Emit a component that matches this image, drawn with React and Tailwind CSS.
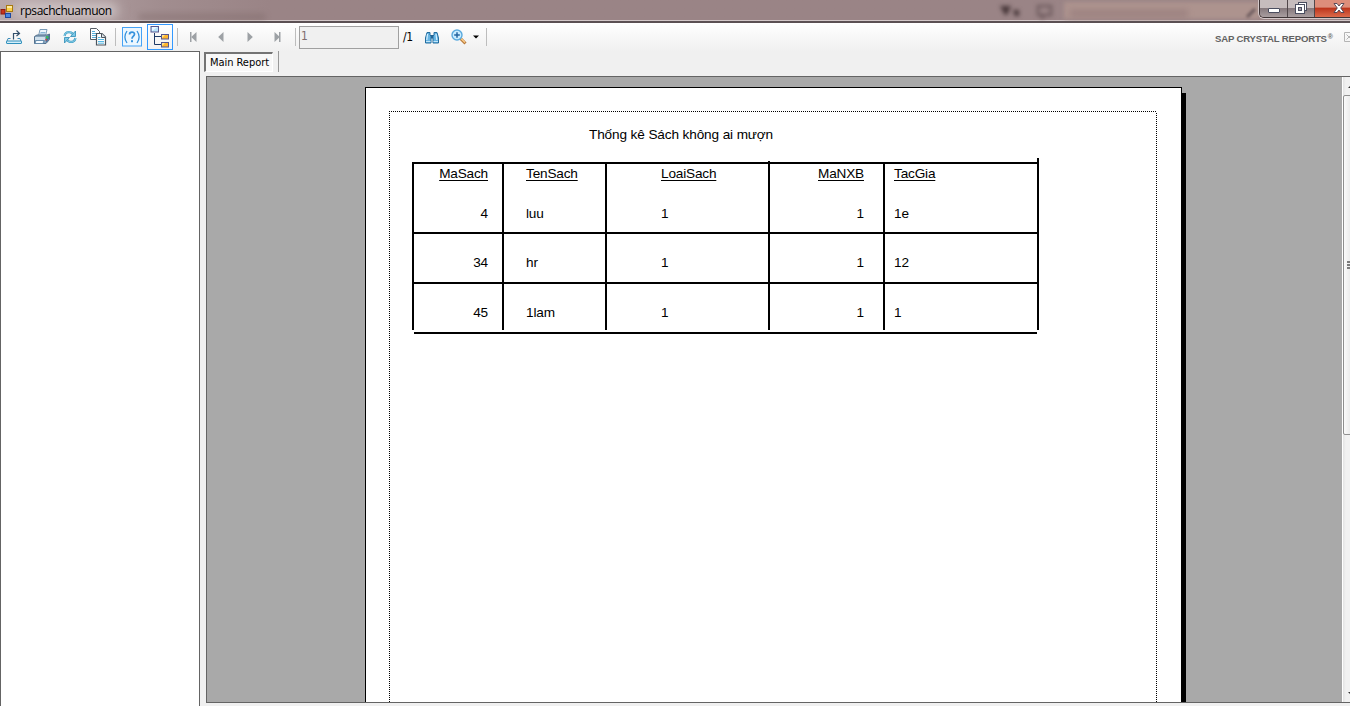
const columns = [
  { name: "MaSach", cell: "w-[90px] text-right pr-[14px]" },
  { name: "TenSach", cell: "w-[103px] pl-[22px]" },
  { name: "LoaiSach", cell: "w-[163px] pl-[54px]" },
  { name: "MaNXB", cell: "w-[115px] text-right pr-[19px]" },
  { name: "TacGia", cell: "w-[156px] pl-[9px] border-r-2" },
];

const rows = [
  ["4", "luu", "1", "1", "1e"],
  ["34", "hr", "1", "1", "12"],
  ["45", "1lam", "1", "1", "1"],
];

function AppIcon() {
  return (
    <svg width="14" height="14" viewBox="0 0 14 14">
      <rect x="6.5" y="1.5" width="6" height="6" fill="#fbd04a" stroke="#a87a10" />
      <rect x="7" y="2" width="5" height="2" fill="#fdeaa0" />
      <rect x="1" y="5.5" width="4" height="4.5" fill="#c8341c" stroke="#8c1c10" />
      <rect x="5.5" y="9.5" width="5" height="4" fill="#4a86e0" stroke="#1c48a0" />
    </svg>
  );
}

function ExportIcon() {
  return (
    <svg width="18" height="18" viewBox="0 0 18 18" fill="none">
      <path d="M5.5 10.5H3L1.5 14.5M12.5 10.5H15L16.5 14.5" stroke="#3d8cb8" />
      <rect x="1.5" y="13" width="15" height="2.5" rx="0.5" fill="#d4effa" stroke="#3090bc" />
      <path d="M8.5 11.5V5.5H14M11.5 2.5L14.5 5.5L11.5 8" stroke="#33506c" strokeWidth="1.2" />
    </svg>
  );
}

function PrinterIcon() {
  return (
    <svg width="18" height="18" viewBox="0 0 18 18">
      <path d="M5.5 8L7 1.5H14L12.5 8Z" fill="#eef6fc" stroke="#7a9cb8" />
      <path d="M7.5 4.5H12.5M7 6H12" stroke="#88b4d4" />
      <path d="M1.5 8.5L4 7H14L16.5 6V11.5L13 15.5H1.5Z" fill="#87a3bb" stroke="#54708c" />
      <path d="M2 9H12V12H2Z" fill="#cfdfeb" />
      <path d="M3 12.5H11L10 15.5H2Z" fill="#f6fbff" stroke="#5580a4" strokeWidth="0.8" />
      <path d="M13 8.5L16 7V11L13 14.5Z" fill="#416ea0" />
      <rect x="13" y="8" width="2.5" height="2.5" fill="#3cb85c" />
      <rect x="12.5" y="11" width="1.5" height="1.5" fill="#d84030" />
    </svg>
  );
}

function RefreshIcon() {
  return (
    <svg width="16" height="16" viewBox="0 0 16 16" fill="none">
      <path d="M2.5 7C3 3.7 6 2.3 9 3.5L11 5" stroke="#3b9cc4" strokeWidth="2.2" />
      <path d="M2.5 7C3 3.7 6 2.3 9 3.5L11 5" stroke="#a4def2" strokeWidth="0.8" />
      <path d="M13.5 2V7.5H8.5Z" fill="#7ccae8" stroke="#2f8ab4" strokeWidth="0.8" />
      <path d="M13.5 9C13 12.3 10 13.7 7 12.5L5 11" stroke="#3b9cc4" strokeWidth="2.2" />
      <path d="M13.5 9C13 12.3 10 13.7 7 12.5L5 11" stroke="#a4def2" strokeWidth="0.8" />
      <path d="M2.5 14V8.5H7.5Z" fill="#7ccae8" stroke="#2f8ab4" strokeWidth="0.8" />
    </svg>
  );
}

function CopyIcon() {
  return (
    <svg width="18" height="18" viewBox="0 0 18 18">
      <path d="M1.5 0.5H7.5L10.5 3.5V11.5H1.5Z" fill="#fff" stroke="#555c64" />
      <path d="M3 3.5H6M3 5.5H8M3 7.5H8M3 9.5H8" stroke="#58b0dc" />
      <path d="M7.5 5.5H13L16.5 9V17H7.5Z" fill="#fff" stroke="#4c545c" strokeWidth="1.2" />
      <path d="M12.5 5.5V9.5H16.5" fill="#dce4ea" stroke="#4c545c" />
      <path d="M9 9.5H11.5M9 11.5H15M9 13.5H15M9 15.2H15" stroke="#58b8e4" />
    </svg>
  );
}

function HelpIcon() {
  return (
    <svg width="20" height="20" viewBox="0 0 20 20" fill="none">
      <rect x="0.5" y="0.5" width="19" height="18.5" fill="#ecf7ff" stroke="#45a2f5" />
      <path d="M5 4Q0.8 10 5 16M15 4Q19.2 10 15 16" stroke="#3592dd" strokeWidth="1.3" />
      <path d="M7.5 7.5C7.5 4.3 12.6 4.4 12.5 7.3C12.4 9 10 9.3 10 11.7" stroke="#3592dd" strokeWidth="1.7" />
      <rect x="9" y="13.2" width="2" height="2" fill="#3592dd" />
    </svg>
  );
}

function TreeIcon() {
  return (
    <svg width="20" height="22" viewBox="0 0 20 22">
      <path d="M4.5 7V18.5H11M4.5 10.5H11" fill="none" stroke="#1c3866" />
      <rect x="1" y="0.5" width="7.5" height="5.5" fill="#b8e2fa" stroke="#57568e" />
      <path d="M2 5L7.5 1H2Z" fill="#ecf8ff" />
      <rect x="11.5" y="8.5" width="7" height="4.5" fill="#ffb52c" stroke="#57568e" />
      <rect x="11.5" y="16.5" width="7" height="4.5" fill="#ffb52c" stroke="#57568e" />
      <path d="M12 9H15L12 12ZM12 17H15L12 20Z" fill="#ffe48c" />
    </svg>
  );
}

function NavIcon({ kind }) {
  const left = kind === "first" || kind === "prev";
  const bar = kind === "first" || kind === "last";
  return (
    <svg width="8" height="10" viewBox="0 0 8 10" fill="#9da1a5" className="shrink-0">
      <path d={left ? "M6.5 0V10L1.2 5Z" : "M0.5 0V10L5.8 5Z"} />
      {bar && <rect x={left ? 0 : 5} y="0" width="1.5" height="10" />}
    </svg>
  );
}

function FindIcon() {
  return (
    <svg width="16" height="16" viewBox="0 0 16 16">
      <path d="M3 3.5H6V6L7 7V14H1.5V9Z" fill="#67b5e4" stroke="#246c9e" />
      <path d="M13 3.5H10V6L9 7V14H14.5V9Z" fill="#67b5e4" stroke="#246c9e" />
      <path d="M7 6H9V9.5H7Z" fill="#226496" />
      <path d="M3.5 5L2.8 11M12 5L12.8 11" stroke="#d5f0ff" strokeWidth="1.2" />
      <path d="M2 12.5H6.5M9.5 12.5H14" stroke="#c2e6fa" />
    </svg>
  );
}

function ZoomIcon() {
  return (
    <svg width="16" height="16" viewBox="0 0 16 16">
      <path d="M9.5 9.5L14.5 14.5" stroke="#b77a3c" strokeWidth="3" />
      <path d="M10 9.5L14 13.5" stroke="#ffd08c" strokeWidth="1.2" />
      <circle cx="6" cy="6" r="5" fill="#c8ecff" stroke="#5aaade" strokeWidth="1.4" />
      <path d="M6 3.2V8.8M3.2 6H8.8" stroke="#2464a0" strokeWidth="1.5" />
    </svg>
  );
}

function Separator({ className }) {
  return <div className={`h-[18px] w-px shrink-0 bg-[#bdbdbd] ${className}`} />;
}

function TitleBar() {
  return (
    <header className="relative flex h-[23px] shrink-0 items-start overflow-hidden border-b-2 border-[#5b5053] bg-[#9a8486] shadow-[inset_0_-1px_0_#d2c7c8]">
      <div className="absolute inset-0 h-5 bg-linear-to-r from-[#b9a9ab] from-0% via-[#a18d8f] via-[12%] to-[#9a8486] to-[20%]" />
      <div className="absolute left-[14px] top-[3px] h-[15px] w-[104px] rounded-full bg-[#cfc5c6] blur-[6px]" />
      <div className="absolute left-[138px] top-[14px] h-[6px] w-[128px] rounded-full bg-[#75605f] opacity-40 blur-[3px]" />
      <div className="absolute left-[1064px] top-[2px] h-[17px] w-[196px] bg-[#ad938e] blur-[2px]" />
      <div className="absolute left-[1070px] top-[10px] h-[7px] w-[118px] bg-[#94797a] opacity-70 blur-[3px]" />
      <svg className="absolute left-[998px] top-[3px] blur-[2px]" width="60" height="16" viewBox="0 0 60 16">
        <path d="M2 3H13L9 12H7ZM15 7H21V13H17Z" fill="#463638" />
        <path d="M40 3H53V12H47L44 15V12H40Z" fill="none" stroke="#665356" strokeWidth="2" />
      </svg>
      <svg className="absolute left-[1246px] top-[6px] blur-[1.5px]" width="12" height="12"><path d="M1 11L9 3" stroke="#68575a" strokeWidth="3" /></svg>
      <div className="relative flex gap-[6px] pt-[4px]">
        <AppIcon />
        <span className="-mt-px whitespace-nowrap font-['Open_Sans',sans-serif] text-[12px] leading-[16px] tracking-[-0.44px] text-black">rpsachchuamuon</span>
      </div>
      <div className="relative ml-auto flex h-[18px] w-[91px] shrink-0 overflow-hidden rounded-bl-[5px] border-b border-l border-[#3e3436] shadow-[0_0_0_1px_#d4c8c9]">
        <div className="flex w-[28px] items-start justify-center border-r border-[#51474a] bg-linear-to-b from-[#c6bcbd] from-45% via-[#86797d] via-50% to-[#a99ea0] pt-[8px]">
          <svg width="12" height="5"><rect x="0.5" y="0.5" width="11" height="4" rx="0.5" fill="#fff" stroke="#4b4e60" /></svg>
        </div>
        <div className="flex w-[27px] items-start justify-center border-r border-[#51474a] bg-linear-to-b from-[#c6bcbd] from-45% via-[#86797d] via-50% to-[#a99ea0] pt-[2px]">
          <svg width="13" height="12" viewBox="0 0 13 12">
            <rect x="3.5" y="0.5" width="8" height="8" fill="#fff" stroke="#4b4e60" />
            <rect x="0.5" y="2.5" width="9" height="9" fill="#fff" stroke="#4b4e60" />
            <rect x="3.5" y="5.5" width="3" height="3" fill="#a29ba5" stroke="#4b4e60" />
          </svg>
        </div>
        <div className="flex grow items-start justify-center bg-linear-to-b from-[#dd8e7b] from-40% via-[#bd361d] via-50% to-[#dc694a] pl-[12px] pt-[3px]">
          <svg width="12" height="10" viewBox="0 0 12 10">
            <path d="M1 0.5H4L6 3L8 0.5H11L7.7 5L11 9.5H8L6 7L4 9.5H1L4.3 5Z" fill="#fff" stroke="#4b4050" strokeWidth="0.9" />
          </svg>
        </div>
      </div>
    </header>
  );
}

function Toolbar() {
  return (
    <div className="flex h-7 shrink-0 items-center overflow-hidden bg-linear-to-b from-white to-[#f0f0f0]">
      <div className="ml-[5px] w-[18px]"><ExportIcon /></div>
      <div className="ml-[10px] w-[18px]"><PrinterIcon /></div>
      <div className="ml-[11px] w-[16px]"><RefreshIcon /></div>
      <div className="ml-[11px] w-[18px]"><CopyIcon /></div>
      <Separator className="ml-[8px]" />
      <div className="ml-[6px] w-[20px]"><HelpIcon /></div>
      <div className="ml-[5px] flex h-[26px] w-[26px] shrink-0 items-center justify-center border border-[#3399ff]"><TreeIcon /></div>
      <Separator className="ml-[4px] mr-[12px]" />
      <NavIcon kind="first" />
      <div className="ml-[19px] flex"><NavIcon kind="prev" /></div>
      <div className="ml-[22px] flex"><NavIcon kind="next" /></div>
      <div className="ml-[19px] flex"><NavIcon kind="last" /></div>
      <Separator className="ml-[13px]" />
      <div className="ml-[3px] h-[23px] w-[100px] shrink-0 border border-[#a0a0a0] bg-[#f0f0f0] pl-px font-['DejaVu_Sans_Condensed','DejaVu_Sans',sans-serif] text-[12px] leading-[19px] text-[#806e6e]">1</div>
      <span className="ml-[4px] w-[12px] font-['DejaVu_Sans_Condensed','DejaVu_Sans',sans-serif] text-[12px] leading-[20px] tracking-[-0.3px] text-black">/1</span>
      <div className="ml-[9px] w-[16px]"><FindIcon /></div>
      <div className="ml-[11px] w-[16px]"><ZoomIcon /></div>
      <svg className="ml-[6px]" width="6" height="4"><path d="M0 0.5H6L3 3.5Z" fill="#000" /></svg>
      <Separator className="ml-[7px]" />
      <div className="ml-auto flex shrink-0 items-center pt-[3px]">
        <span className="whitespace-nowrap font-['Liberation_Sans',sans-serif] text-[9.6px] font-bold leading-[12px] tracking-[-0.18px] text-[#626262]">SAP CRYSTAL REPORTS</span>
        <span className="-mt-[3px] ml-px font-['Liberation_Sans',sans-serif] text-[7px] font-bold leading-[8px] text-[#626262]">®</span>
        <svg className="-mt-[3px] ml-[11px]" width="6" height="10"><path d="M6 0.5H0.5V9.5H6M2.5 2.5L6 6M2.5 7.5L6 4" fill="none" stroke="#b4b4b4" /></svg>
      </div>
    </div>
  );
}

function ReportTable() {
  return (
    <div className="ml-[22px] w-[627px] text-[13.6px] leading-[16px] tracking-[-0.17px]">
      {rows.map((row, r) => (
        <div key={r} className={r === 0 ? "flex h-[70px]" : r === 1 ? "flex h-[50px]" : "flex h-[48px]"}>
          {columns.map((col, c) => (
            <div key={col.name} className={`relative flex flex-col border-l-2 border-t-2 border-black ${col.cell}`}>
              {r === 0 && c === 3 && <div className="absolute -left-[2px] -top-[3px] h-px w-[2px] bg-black" />}
              {r === 0 && c === 4 && <div className="absolute -right-[2px] -top-[6px] h-[4px] w-[2px] bg-black" />}
              {r === 0 && <div className="mb-[24px] mt-[2px] underline decoration-1 underline-offset-[2px]">{col.name}</div>}
              <div className={r === 0 ? "" : "pt-[21px]"}>{row[c]}</div>
            </div>
          ))}
        </div>
      ))}
      <div className="ml-[2px] mr-[2px] mt-[2px] h-[2px] bg-black" />
    </div>
  );
}

function Page() {
  return (
    <div className="relative ml-[158px] mt-[10px] flex h-[615px]">
      <div className="h-full w-[817px] border-x border-t border-black bg-white pl-[23px] pt-[23px]">
        <div className="flex h-full w-[768px] flex-col">
          <div className="h-px shrink-0 bg-[repeating-linear-gradient(to_right,#000_0_1px,#fff_1px_2px)]" />
          <div className="flex grow">
            <div className="w-px bg-[repeating-linear-gradient(to_bottom,#fff_0_1px,#000_1px_2px)]" />
            <div className="grow font-['Liberation_Sans',Arial,sans-serif] text-black">
              <h1 className="mb-[27px] ml-[199px] mt-[15px] h-[8px] whitespace-nowrap text-[13.6px] leading-[16px] tracking-[-0.12px]">Thống kê Sách không ai mượn</h1>
              <ReportTable />
            </div>
            <div className="w-px bg-[repeating-linear-gradient(to_bottom,#fff_0_1px,#000_1px_2px)]" />
          </div>
        </div>
      </div>
      <div className="mt-[6px] w-[4px] bg-black" />
    </div>
  );
}

function ScrollBar() {
  return (
    <div className="flex w-[8px] shrink-0 flex-col overflow-hidden border-l border-white bg-linear-to-r from-[#e3e3e3] to-[#f1f1f1] to-40%">
      <svg className="ml-[5px] mt-[8px] shrink-0" width="7" height="4"><path d="M0 3L3 0L6 3Z" fill="#333" /></svg>
      <div className="mt-[6px] flex h-[340px] w-[14px] shrink-0 items-center rounded-l-[2px] border border-[#8f8f8f] bg-linear-to-r from-[#fafafa] to-[#dddddd]">
        <svg className="ml-[3px]" width="8" height="8"><path d="M0 1H8M0 4H8M0 7H8" stroke="#555" strokeWidth="1.5" /></svg>
      </div>
      <svg className="mb-[6px] ml-[5px] mt-auto shrink-0" width="7" height="4"><path d="M0 0L3 3L6 0Z" fill="#333" /></svg>
    </div>
  );
}

export default function App() {
  return (
    <div className="flex h-[706px] w-[1350px] flex-col overflow-hidden bg-[#f0f0f0]">
      <TitleBar />
      <Toolbar />
      <main className="flex h-[655px] shrink-0">
        <aside className="w-[200px] shrink-0 border-x border-t border-[#646464] bg-white" />
        <section className="flex w-[1150px] flex-col">
          <div className="flex h-[25px] shrink-0">
            <div className="ml-[4px] mt-px h-[20px] w-[69px] border-b border-l-2 border-r border-t-2 border-b-white border-l-[#747474] border-r-white border-t-[#747474] bg-[#f8f8f8] pl-[4px] font-['DejaVu_Sans_Condensed','DejaVu_Sans',sans-serif] text-[11px] leading-[17px] tracking-[-0.05px] whitespace-nowrap text-black">Main Report</div>
            <div className="ml-[5px] h-[21px] w-px bg-[#989898]" />
          </div>
          <div className="ml-[6px] flex h-[627px] shrink-0 overflow-hidden border-b border-l border-t border-[#646464] bg-[#a9a9a9]">
            <div className="grow overflow-hidden"><Page /></div>
            <ScrollBar />
          </div>
        </section>
      </main>
    </div>
  );
}
